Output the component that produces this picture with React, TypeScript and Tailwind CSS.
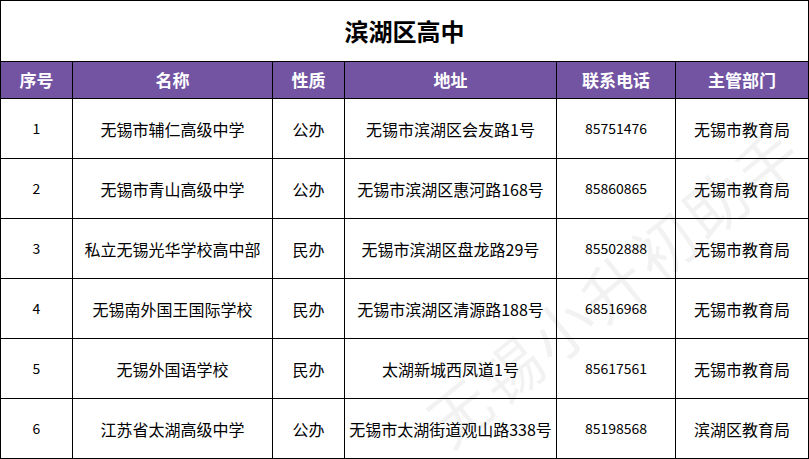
const font = "font-['SimSun','Noto_Sans_CJK_SC',sans-serif]";

const COLS = "grid grid-cols-[72px_200px_72px_212px_119px_133px]";

const headers = ["序号", "名称", "性质", "地址", "联系电话", "主管部门"];

const schools = [
  { no: "1", name: "无锡市辅仁高级中学", kind: "公办", addr: "无锡市滨湖区会友路1号", tel: "85751476", dept: "无锡市教育局" },
  { no: "2", name: "无锡市青山高级中学", kind: "公办", addr: "无锡市滨湖区惠河路168号", tel: "85860865", dept: "无锡市教育局" },
  { no: "3", name: "私立无锡光华学校高中部", kind: "民办", addr: "无锡市滨湖区盘龙路29号", tel: "85502888", dept: "无锡市教育局" },
  { no: "4", name: "无锡南外国王国际学校", kind: "民办", addr: "无锡市滨湖区清源路188号", tel: "68516968", dept: "无锡市教育局" },
  { no: "5", name: "无锡外国语学校", kind: "民办", addr: "太湖新城西凤道1号", tel: "85617561", dept: "无锡市教育局" },
  { no: "6", name: "江苏省太湖高级中学", kind: "公办", addr: "无锡市太湖街道观山路338号", tel: "85198568", dept: "滨湖区教育局" },
];

export default function App() {
  return (
    <div className={`relative w-[809px] h-[459px] overflow-hidden bg-white text-black ${font}`}>
      <div className="border-l border-t border-black">
        {/* title */}
        <div className="flex h-[61px] items-center justify-center border-r border-b border-black text-[24px] font-bold">
          滨湖区高中
        </div>

        {/* header */}
        <div className={`${COLS} h-[37px] bg-[#7254a3] text-[17px] font-bold text-white`}>
          {headers.map((h) => (
            <div key={h} className="flex items-center justify-center border-r border-b border-black">
              {h}
            </div>
          ))}
        </div>

        {schools.map((s) => (
          <div key={s.no} className={`${COLS} h-[60px] text-[16px]`}>
            {[s.no, s.name, s.kind, s.addr, s.tel, s.dept].map((v, i) => (
              <div
                key={i}
                className={`flex items-center justify-center whitespace-nowrap border-r border-b border-black ${
                  i === 0 || i === 4 ? "text-[14px]" : ""
                }`}
              >
                {v}
              </div>
            ))}
          </div>
        ))}
      </div>

      {/* watermark */}
      <div className="pointer-events-none absolute left-[382px] top-[238px] origin-center -rotate-[39deg] whitespace-nowrap text-[62px] tracking-[4px] text-black/[0.05]">
        无锡小升初助手
      </div>
    </div>
  );
}
